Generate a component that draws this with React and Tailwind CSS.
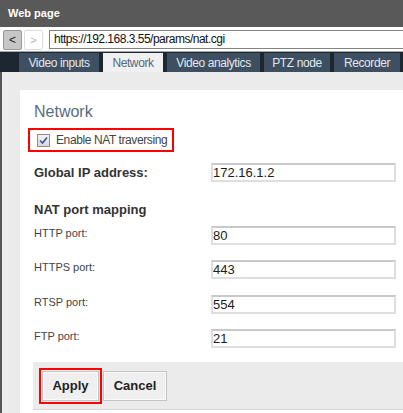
import { useState } from 'react'

const TABS = [
    { label: 'Video inputs', width: 'w-[80px]' },
    { label: 'Network', width: 'w-[60px]', active: true },
    { label: 'Video analytics', width: 'w-[93px]' },
    { label: 'PTZ node', width: 'w-[66px]' },
    { label: 'Recorder', width: 'w-[66px]' },
]

const PORTS = [
    { label: 'HTTP port:', value: '80' },
    { label: 'HTTPS port:', value: '443' },
    { label: 'RTSP port:', value: '554' },
    { label: 'FTP port:', value: '21' },
]

function TextBox({ value, onChange }) {
    return (
        <input
            value={value}
            onChange={(e) => onChange(e.target.value)}
            className="w-[185px] h-[19px] border-2 border-[#dedede] border-t-[#c9c9c9] bg-white px-0 text-[13px] leading-[15px] text-[#1c1c1c] outline-none"
        />
    )
}

export default function App() {
    const [nat, setNat] = useState(true)
    const [ip, setIp] = useState('172.16.1.2')
    const [ports, setPorts] = useState(PORTS.map((p) => p.value))

    return (
        <div className="w-[403px] h-[413px] overflow-hidden flex flex-col bg-[#ebebeb] font-['Liberation_Sans',Arial,sans-serif]">
            <div className="h-[27px] shrink-0 bg-[#595959] flex items-center pl-2 text-[11px] font-bold text-white">
                Web page
            </div>

            <div className="h-[25px] shrink-0 bg-white border-b border-[#a6a6a6] flex items-start pt-[3px] pl-[3px] gap-[2px]">
                <button className="w-[19px] h-[20px] rounded-[2px] border border-[#989898] bg-[#c6c6c6] text-[12px] leading-[18px] text-[#222]">
                    &lt;
                </button>
                <button className="w-[19px] h-[20px] rounded-[2px] border border-[#dddddd] bg-white text-[11px] leading-[18px] text-[#b4b4b4]">
                    &gt;
                </button>
                <div className="ml-[4px] flex-1 h-[19px] border border-[#828282] border-r-0 bg-white pl-[4px] text-[12px] leading-[17px] tracking-[-0.5px] text-[#111]">
                    https://192.168.3.55/params/nat.cgi
                </div>
            </div>

            <div className="h-[20px] shrink-0 bg-[#1d2731] flex items-end pl-[19px] gap-[4px]">
                {TABS.map((tab) => (
                    <div
                        key={tab.label}
                        className={`${tab.width} h-[19px] flex items-center justify-center text-[12px] tracking-[-0.4px] ${tab.active ? 'bg-[#f0f0f0] text-[#54687b]' : 'bg-[#3d4f61] text-[#e2e8ee]'
                            }`}
                    >
                        {tab.label}
                    </div>
                ))}
            </div>

            <div className="flex-1 flex flex-col border-l-2 border-[#555] pt-[18px] pl-[18px]">
                <div className="flex-1 bg-white pl-[14px] pt-[12px]">
                    <h2 className="text-[16px] leading-[20px] text-[#5a6c7e]">Network</h2>

                    <div className="mt-[6px] -ml-[6px] w-[146px] h-[24px] border-2 border-[#ff0000] flex items-center pl-[7px] gap-[6px]">
                        <button
                            onClick={() => setNat(!nat)}
                            className="w-[13px] h-[13px] border border-[#8e8e8e] bg-gradient-to-b from-[#f2f2f2] to-[#d9d9d9] flex items-center justify-center"
                        >
                            {nat && (
                                <svg width="9" height="9" viewBox="0 0 9 9">
                                    <path d="M1 4.5 L3.5 7 L8 1.5" fill="none" stroke="#3c4fa0" strokeWidth="1.6" />
                                </svg>
                            )}
                        </button>
                        <span className="text-[12px] tracking-[-0.4px] text-[#444]">Enable NAT traversing</span>
                    </div>

                    <div className="mt-[11px] flex items-center h-[19px]">
                        <span className="w-[177px] text-[13px] leading-[19px] font-bold text-[#333]">Global IP address:</span>
                        <TextBox value={ip} onChange={setIp} />
                    </div>

                    <h3 className="mt-[20px] text-[13px] leading-[16px] font-bold text-[#333]">NAT port mapping</h3>

                    <div className="mt-[8px] flex flex-col gap-[15.33px]">
                        {PORTS.map((port, i) => (
                            <div key={port.label} className="flex items-start h-[19px]">
                                <span className="w-[177px] text-[11px] leading-[15px] text-[#444]">{port.label}</span>
                                <TextBox
                                    value={ports[i]}
                                    onChange={(v) => setPorts(ports.map((p, j) => (j === i ? v : p)))}
                                />
                            </div>
                        ))}
                    </div>

                    <div className="mt-[14px] -ml-px h-[48px] bg-[#ebebeb] border-b border-[#d9d9d9] flex items-start pt-[6px] pl-[6px] gap-px">
                        <div className="w-[63px] h-[36px] border-2 border-[#ff0000] p-px">
                            <button className="w-full h-[30px] border border-[#c4c4c4] bg-[#efefef] shadow-[inset_0_0_0_1px_#f9f9f9] text-[13px] font-bold text-[#222]">
                                Apply
                            </button>
                        </div>
                        <button className="mt-[3px] w-[64px] h-[30px] border border-[#c4c4c4] bg-[#efefef] shadow-[inset_0_0_0_1px_#f9f9f9] text-[13px] font-bold text-[#222]">
                            Cancel
                        </button>
                    </div>
                </div>
            </div>
        </div>
    )
}
